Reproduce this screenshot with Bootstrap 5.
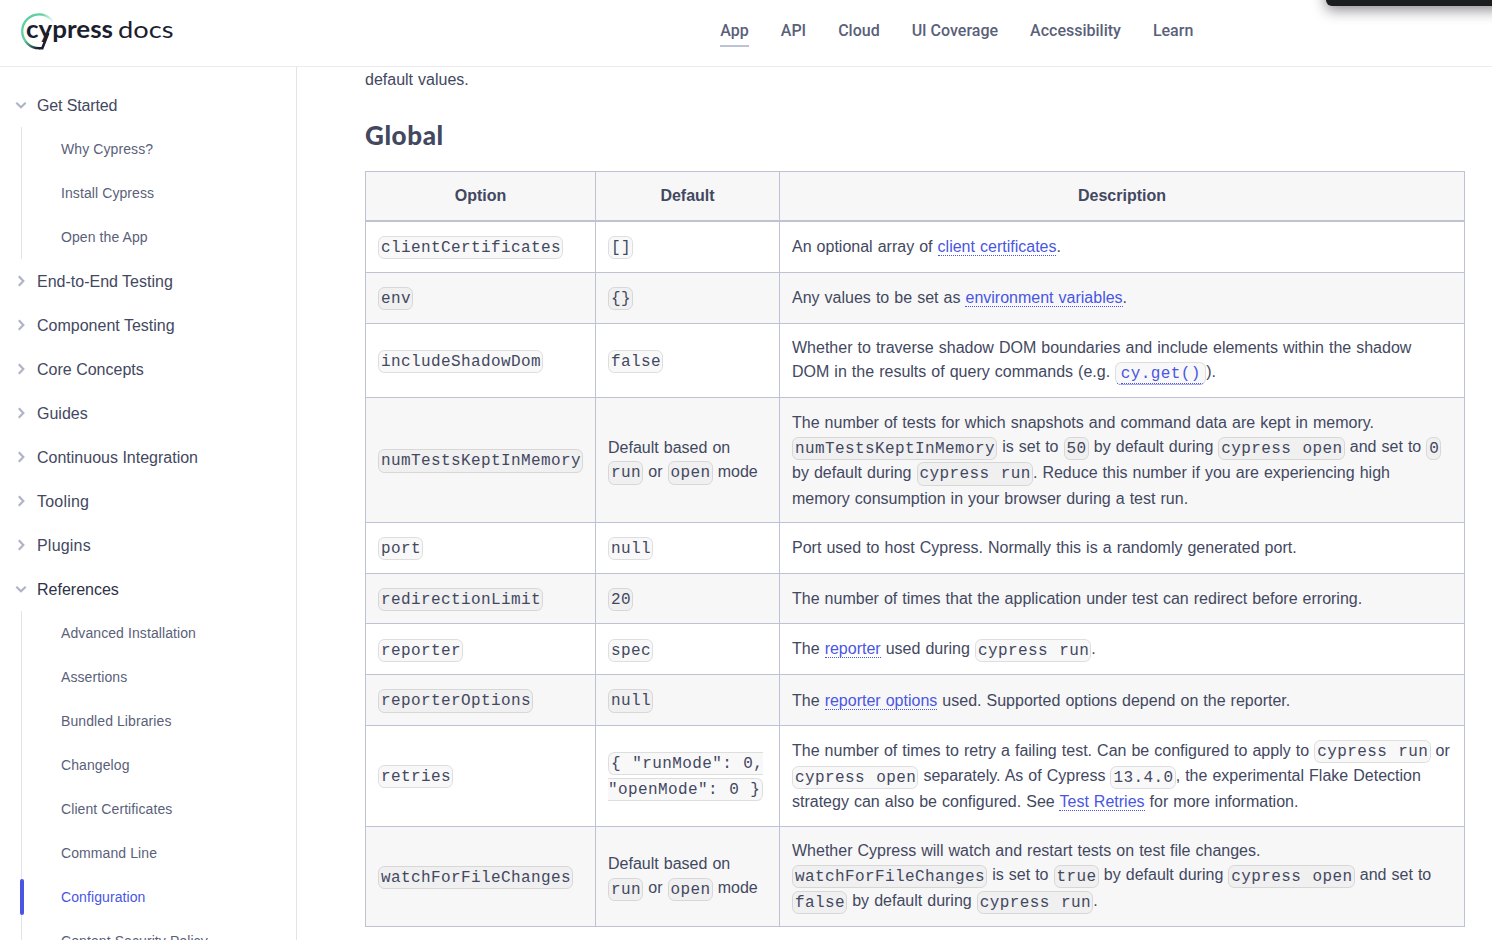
<!DOCTYPE html>
<html lang="en">
<head>
<meta charset="utf-8">
<title>Configuration | Cypress Documentation</title>
<link rel="stylesheet" href="https://cdn.jsdelivr.net/npm/bootstrap@5.3.0/dist/css/bootstrap.min.css">
<style>
body{font-family:"Liberation Sans",Arial,sans-serif;color:#434861;font-size:16px;line-height:24px;height:940px;overflow:hidden;background:#fff}
.topbar{height:67px;border-bottom:1px solid #ececee;background:#fff;padding:0 0 0 20px}
.brand-logo{width:156px;height:40px;margin-top:-5px}
.topnav{font-family:Roboto,sans-serif;font-weight:500;margin-left:544.3px;gap:32px;margin-top:-5px}
.topnav a{color:#5a5f7a;text-decoration:none;padding:4px 0 0;height:32px;border-bottom:2px solid transparent;white-space:nowrap}
.topnav a.active{border-color:#bfc2d4}
.popup-edge{position:absolute;top:-30px;right:-12px;width:178px;height:36px;background:#1b1e1c;border-radius:6px;box-shadow:0 4px 14px rgba(27,20,28,.5)}
.layout{height:873px;overflow:hidden}
.side{width:297px;border-right:1px solid #e1e3ed;padding-top:16px}
.side a{color:inherit;text-decoration:none;height:44px;white-space:nowrap}
.cat{padding-left:15px;gap:10px}
.cat span{padding-top:1px}
.cat .tight{letter-spacing:-.15px}
.cat .wide{letter-spacing:.2px}
.cat svg{width:12px;height:12px;flex:none}
.cat.current{color:#2e3247}
.sub-list{margin-left:21px;border-left:1px solid #e1e3ed;font-size:14px;color:#5a5f7a;letter-spacing:.09px}
.sub-list a{padding-left:39px}
.sub-list a.active{color:#4956e3;position:relative}
.sub-list a.active::before{content:"";position:absolute;left:-2px;top:4px;width:4px;height:36px;border-radius:2px;background:#4956e3}
.doc{padding:1px 0 0 68px;width:1168px;word-spacing:.6px}
.doc h2{font-family:"Lato",sans-serif;font-weight:900;font-size:26px;letter-spacing:.6px;line-height:32px;margin:27px 0 20px;color:#434861}
.opts{border-collapse:collapse;width:1100px;table-layout:fixed}
.opts th,.opts td{border:1px solid #bfc2d4;padding:12px}
.opts th{text-align:center;background:#f7f7f7;border-bottom-width:2px}
.opts tbody tr:nth-child(even){background:#f7f7f7}
.opts td{vertical-align:middle;padding:12.6px 12px 11.4px}
.opts td:first-child{white-space:nowrap}
.doc code{font-family:"Liberation Mono",monospace;font-size:16px;letter-spacing:.395px;word-spacing:1.2px;color:inherit;background:rgba(0,0,0,.027);border:1px solid rgba(0,0,0,.1);border-radius:6.4px;padding:2.2px 1.2px 1px 2px;vertical-align:-.8px}
.doc a{color:#4956e3;text-decoration:none;border-bottom:1px dotted #4956e3}
.doc code.code-link{padding:2.2px 4.5px 1px;border-bottom:1px dotted #4956e3}
</style>
</head>
<body>
<header class="topbar d-flex align-items-center position-relative">
<svg class="brand-logo flex-shrink-0" viewBox="0 0 156 40" role="img">
<defs>
<linearGradient id="fade" x1="34" y1="0" x2="22" y2="0" gradientUnits="userSpaceOnUse"><stop offset="0" stop-color="#69d3a7" stop-opacity="0"/><stop offset="1" stop-color="#5fcf9f"/></linearGradient>
<linearGradient id="dark" x1="6" y1="28" x2="19" y2="38" gradientUnits="userSpaceOnUse"><stop offset="0" stop-color="#5fcf9f"/><stop offset=".9" stop-color="#1b1e2e"/></linearGradient>
</defs>
<path d="M34 12A17 17 0 0 0 2.200 20.500" fill="none" stroke="url(#fade)" stroke-width="2.300"/>
<path d="M2.200 20.300A17 17 0 0 0 20 37.200" fill="none" stroke="url(#dark)" stroke-width="2.300"/>
<path d="M28.300 22L22.300 37.200H18.500" fill="none" stroke="#1b1e2e" stroke-width="2.600"/>
<g fill="#1b1e2e" font-family="Lato,sans-serif" font-size="24"><text x="6" y="26.500" font-weight="700" textLength="87" lengthAdjust="spacingAndGlyphs">cypress</text><text x="98" y="26.500" textLength="55.500" lengthAdjust="spacingAndGlyphs">docs</text></g>
</svg>
<nav class="topnav d-flex"><a class="active" href="#">App</a><a href="#">API</a><a href="#">Cloud</a><a href="#">UI Coverage</a><a href="#">Accessibility</a><a href="#">Learn</a></nav>
<div class="popup-edge"></div>
</header>
<svg class="d-none"><symbol id="down" viewBox="0 0 12 12"><path d="M1.300 3.800L6 8.300L10.700 3.800" fill="none" stroke="#afb3c7" stroke-width="2.200"/></symbol><symbol id="right" viewBox="0 0 12 12"><path d="M3.800 1.300L8.300 6L3.800 10.700" fill="none" stroke="#afb3c7" stroke-width="2.200"/></symbol></svg>
<div class="layout d-flex">
<aside class="side flex-shrink-0">
<a class="cat d-flex align-items-center" href="#"><svg><use href="#down"/></svg><span class="tight">Get Started</span></a>
<div class="sub-list"><a class="d-flex align-items-center" href="#">Why Cypress?</a><a class="d-flex align-items-center" href="#">Install Cypress</a><a class="d-flex align-items-center" href="#">Open the App</a></div>
<a class="cat d-flex align-items-center" href="#"><svg><use href="#right"/></svg><span>End-to-End Testing</span></a>
<a class="cat d-flex align-items-center" href="#"><svg><use href="#right"/></svg><span>Component Testing</span></a>
<a class="cat d-flex align-items-center" href="#"><svg><use href="#right"/></svg><span>Core Concepts</span></a>
<a class="cat d-flex align-items-center" href="#"><svg><use href="#right"/></svg><span>Guides</span></a>
<a class="cat d-flex align-items-center" href="#"><svg><use href="#right"/></svg><span>Continuous Integration</span></a>
<a class="cat d-flex align-items-center" href="#"><svg><use href="#right"/></svg><span class="wide">Tooling</span></a>
<a class="cat d-flex align-items-center" href="#"><svg><use href="#right"/></svg><span class="wide">Plugins</span></a>
<a class="cat current d-flex align-items-center" href="#"><svg><use href="#down"/></svg><span>References</span></a>
<div class="sub-list"><a class="d-flex align-items-center" href="#">Advanced Installation</a><a class="d-flex align-items-center" href="#">Assertions</a><a class="d-flex align-items-center" href="#">Bundled Libraries</a><a class="d-flex align-items-center" href="#">Changelog</a><a class="d-flex align-items-center" href="#">Client Certificates</a><a class="d-flex align-items-center" href="#">Command Line</a><a class="active d-flex align-items-center" href="#">Configuration</a><a class="d-flex align-items-center" href="#">Content Security Policy</a></div>
</aside>
<main class="doc flex-shrink-0">
<p class="mb-0">default values.</p>
<h2>Global</h2>
<table class="opts">
<colgroup><col style="width:230px"><col style="width:184px"><col></colgroup>
<thead><tr><th>Option</th><th>Default</th><th>Description</th></tr></thead>
<tbody>
<tr><td><code>clientCertificates</code></td><td><code>[]</code></td><td>An optional array of <a href="#">client certificates</a>.</td></tr>
<tr><td><code>env</code></td><td><code>{}</code></td><td>Any values to be set as <a href="#">environment variables</a>.</td></tr>
<tr><td><code>includeShadowDom</code></td><td><code>false</code></td><td>Whether to traverse shadow DOM boundaries and include elements within the shadow DOM in the results of query commands (e.g. <code class="code-link"><a href="#">cy.get()</a></code>).</td></tr>
<tr><td><code>numTestsKeptInMemory</code></td><td>Default based on <code>run</code> or <code>open</code> mode</td><td>The number of tests for which snapshots and command data are kept in memory. <code>numTestsKeptInMemory</code> is set to <code>50</code> by default during <code>cypress open</code> and set to <code>0</code> by default during <code>cypress run</code>. Reduce this number if you are experiencing high<br>memory consumption in your browser during a test run.</td></tr>
<tr><td><code>port</code></td><td><code>null</code></td><td>Port used to host Cypress. Normally this is a randomly generated port.</td></tr>
<tr><td><code>redirectionLimit</code></td><td><code>20</code></td><td>The number of times that the application under test can redirect before erroring.</td></tr>
<tr><td><code>reporter</code></td><td><code>spec</code></td><td>The <a href="#">reporter</a> used during <code>cypress run</code>.</td></tr>
<tr><td><code>reporterOptions</code></td><td><code>null</code></td><td>The <a href="#">reporter options</a> used. Supported options depend on the reporter.</td></tr>
<tr><td><code>retries</code></td><td><code>{ "runMode": 0, "openMode": 0 }</code></td><td>The number of times to retry a failing test. Can be configured to apply to <code>cypress run</code> or<br><code>cypress open</code> separately. As of Cypress <code>13.4.0</code>, the experimental Flake Detection strategy can also be configured. See <a href="#">Test Retries</a> for more information.</td></tr>
<tr><td><code>watchForFileChanges</code></td><td>Default based on <code>run</code> or <code>open</code> mode</td><td>Whether Cypress will watch and restart tests on test file changes. <code>watchForFileChanges</code> is set to <code>true</code> by default during <code>cypress open</code> and set to <code>false</code> by default during <code>cypress run</code>.</td></tr>
</tbody></table>
</main>
</div>
<script src="https://cdn.jsdelivr.net/npm/bootstrap@5.3.0/dist/js/bootstrap.bundle.min.js"></script>
</body>
</html>
